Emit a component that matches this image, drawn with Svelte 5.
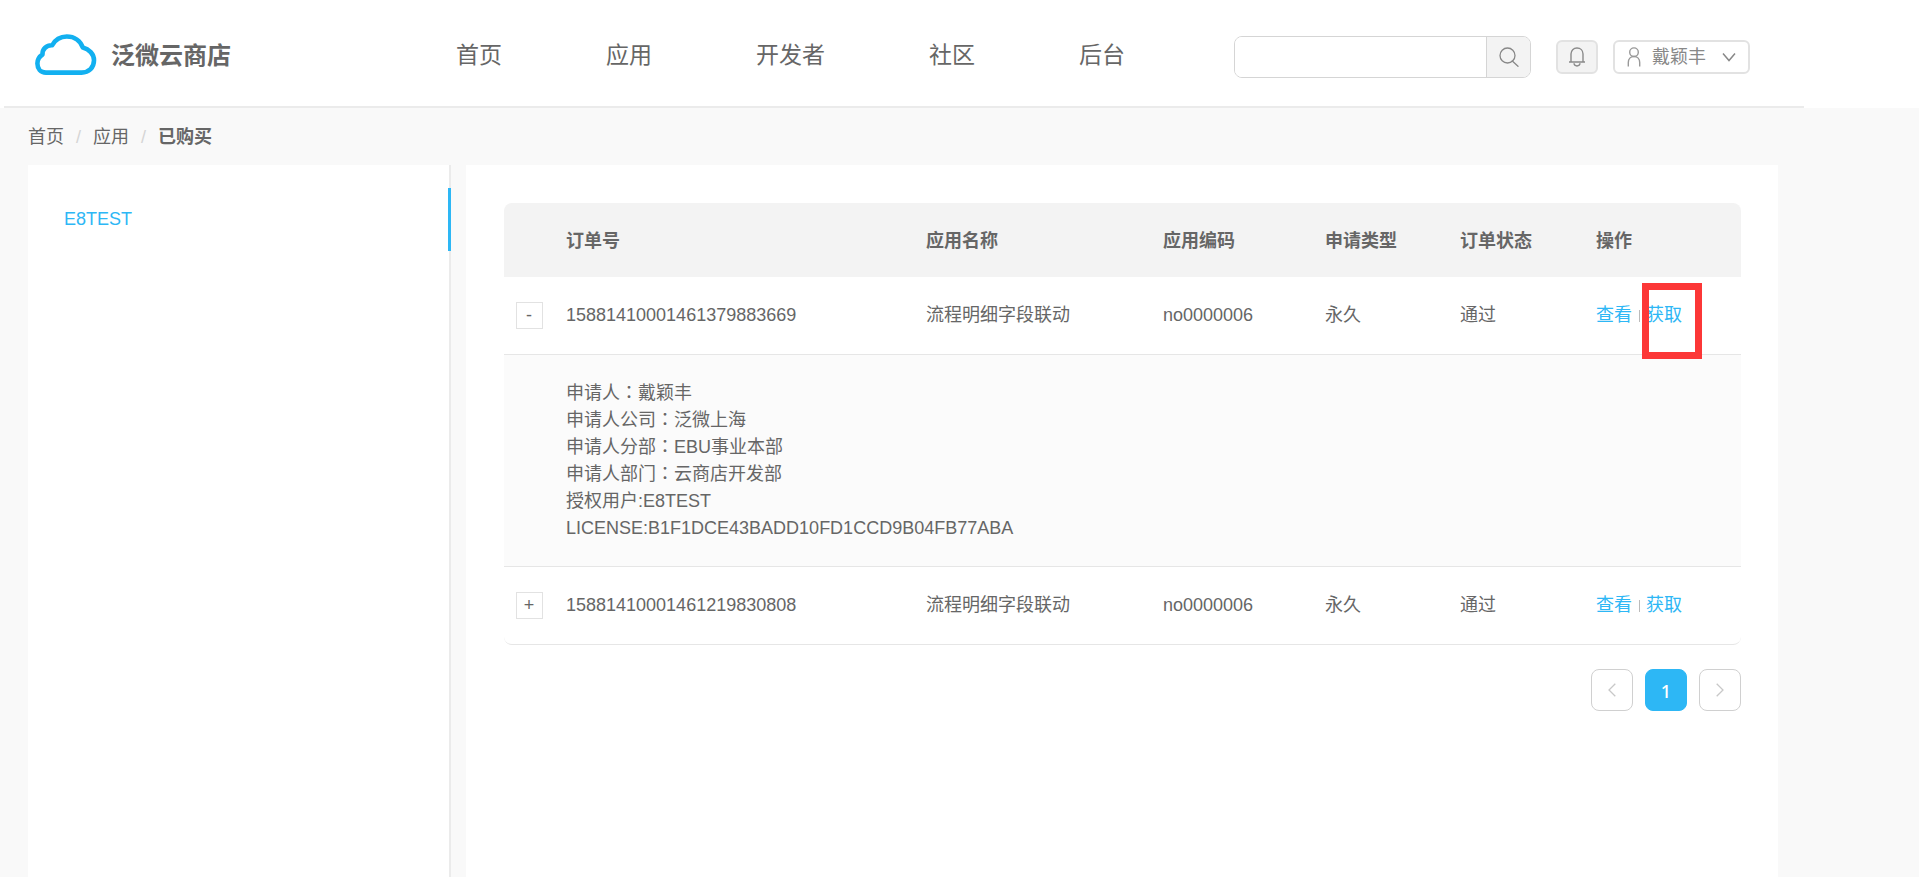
<script>
  const navItems = ["首页", "应用", "开发者", "社区", "后台"];

  const columns = ["订单号", "应用名称", "应用编码", "申请类型", "订单状态", "操作"];

  let keyword = $state("");

  let orders = $state([
    {
      id: "15881410001461379883669",
      name: "流程明细字段联动",
      code: "no0000006",
      type: "永久",
      status: "通过",
      open: true,
      marked: true,
    },
    {
      id: "15881410001461219830808",
      name: "流程明细字段联动",
      code: "no0000006",
      type: "永久",
      status: "通过",
      open: false,
      marked: false,
    },
  ]);

  const details = [
    { label: "申请人", colon: "：", value: "戴颖丰" },
    { label: "申请人公司", colon: "：", value: "泛微上海" },
    { label: "申请人分部", colon: "：", value: "EBU事业本部" },
    { label: "申请人部门", colon: "：", value: "云商店开发部" },
    { label: "授权用户", colon: ":", value: "E8TEST" },
    { label: "LICENSE", colon: ":", value: "B1F1DCE43BADD10FD1CCD9B04FB77ABA" },
  ];
</script>

<div class="page">
  <header>
    <div class="bar">
      <a class="logo" href="#home">
        <svg width="62" height="42" viewBox="0 0 62 42" fill="none" stroke="#12b0f0" stroke-width="4.6" stroke-linejoin="round">
          <path d="M11 38.6C5.500 38.600 2.400 34.500 2.400 29.500C2.400 25.500 4.300 22.600 7.500 20.500C7.200 15 11.500 11 17.200 11.300C20 6 25.500 2.500 31.800 2.500C39.500 2.500 45.500 7 47.800 13.600C54 15 59 20 59 26.300C59 33.500 54 38.600 46.500 38.600Z" />
        </svg>
        <span>泛微云商店</span>
      </a>

      <nav>
        {#each navItems as item}
          <a href="#nav">{item}</a>
        {/each}
      </nav>

      <div class="tools">
        <form class="search" onsubmit={(e) => e.preventDefault()}>
          <input type="text" aria-label="搜索" bind:value={keyword} />
          <button type="submit" aria-label="搜索">
            <svg width="20" height="20" viewBox="0 0 20 20" fill="none" stroke="#888" stroke-width="1.3" stroke-linecap="round">
              <circle cx="8.500" cy="8.500" r="7.500" />
              <path d="M13.300 14L19 19.300" />
            </svg>
          </button>
        </form>

        <button class="bell" type="button" aria-label="通知">
          <svg width="18" height="20" viewBox="0 0 18 20" fill="none" stroke="#8a8a8a" stroke-width="1.400">
            <path d="M1 15H17M3 15V7C3 3.400 5.500 1 9 1S15 3.400 15 7V15" />
            <path d="M6 16.300C6.200 18.200 7.400 19 9 19S11.800 18.200 12 16.300" />
          </svg>
        </button>

        <button class="user" type="button">
          <svg width="14" height="20" viewBox="0 0 14 20" fill="none" stroke="#999" stroke-width="1.400">
            <circle cx="7" cy="5.200" r="4.300" />
            <path d="M1.300 19.500V15.500C1.300 12 3.500 9.500 7 9.500S12.700 12 12.700 15.500V19.500" />
          </svg>
          <span>戴颖丰</span>
          <svg width="14" height="10" viewBox="0 0 14 10" fill="none" stroke="#888" stroke-width="1.500">
            <path d="M1 1.500L7 8.500L13 1.500" />
          </svg>
        </button>
      </div>
    </div>
  </header>

  <div class="breadcrumb">
    <a href="#home">首页</a>
    <i>/</i>
    <a href="#apps">应用</a>
    <i>/</i>
    <b>已购买</b>
  </div>

  <div class="content">
    <aside>
      <a class="active" href="#e8test">E8TEST</a>
    </aside>

    <main>
      <table>
        <colgroup>
          <col class="c-toggle" />
          <col class="c-id" />
          <col class="c-name" />
          <col class="c-code" />
          <col class="c-type" />
          <col class="c-status" />
          <col class="c-action" />
        </colgroup>
        <thead>
          <tr>
            <th></th>
            {#each columns as col}
              <th>{col}</th>
            {/each}
          </tr>
        </thead>
        <tbody>
          {#each orders as order}
            <tr class="order">
              <td class="toggle">
                <button type="button" onclick={() => (order.open = !order.open)}>{order.open ? "-" : "+"}</button>
              </td>
              <td>{order.id}</td>
              <td>{order.name}</td>
              <td>{order.code}</td>
              <td>{order.type}</td>
              <td>{order.status}</td>
              <td class="action">
                <div>
                  <a href="#view">查看</a>
                  <span class="divider"></span>
                  <a href="#get">获取</a>
                </div>
                {#if order.marked}
                  <span class="mark"></span>
                {/if}
              </td>
            </tr>
            {#if order.open}
              <tr class="detail">
                <td></td>
                <td colspan="6">
                  {#each details as d}
                    <p>{d.label}<span class:wide={d.colon === "："}>{d.colon}</span>{d.value}</p>
                  {/each}
                </td>
              </tr>
            {/if}
          {/each}
        </tbody>
      </table>

      <div class="pagination">
        <button type="button" aria-label="上一页" disabled>
          <svg width="8" height="14" viewBox="0 0 8 14" fill="none" stroke="#c8c8c8" stroke-width="1.300">
            <path d="M7.300 0.700L1 7L7.300 13.300" />
          </svg>
        </button>
        <button type="button" class="current">1</button>
        <button type="button" aria-label="下一页" disabled>
          <svg width="8" height="14" viewBox="0 0 8 14" fill="none" stroke="#c8c8c8" stroke-width="1.300">
            <path d="M0.700 0.700L7 7L0.700 13.300" />
          </svg>
        </button>
      </div>
    </main>
  </div>
</div>

<style>
  :global(body) {
    background: #f9f9f9;
  }

  .page {
    display: flex;
    flex-direction: column;
    min-height: 100vh;
    color: #666;
    font-family: "Liberation Sans", "Noto Sans CJK SC", sans-serif;
    font-size: 18px;
    line-height: 27px;
  }

  .page * {
    box-sizing: border-box;
  }

  a {
    color: inherit;
    text-decoration: none;
  }

  button,
  input {
    padding: 0;
    font: inherit;
    color: inherit;
  }

  button {
    display: flex;
    align-items: center;
    justify-content: center;
    cursor: pointer;
  }

  header {
    background: #fff;
  }

  .bar {
    display: flex;
    align-items: center;
    height: 108px;
    margin: 0 115px 0 4px;
    padding: 4px 54px 0 31px;
    border-bottom: 2px solid #ebebeb;
  }

  .logo {
    display: flex;
    align-items: center;
    gap: 14px;
    width: 421px;
    font-size: 24px;
    font-weight: bold;
  }

  nav {
    display: flex;
    gap: 104px;
    font-size: 23px;
    white-space: nowrap;
  }

  .tools {
    display: flex;
    align-items: center;
    margin: 4px 0 0 auto;
  }

  .search {
    display: flex;
    width: 297px;
    height: 42px;
    border: 1px solid #d5d5d5;
    border-radius: 8px;
    overflow: hidden;
  }

  .search input {
    flex: 1;
    min-width: 0;
    padding: 0 12px;
    border: 0;
    outline: 0;
    background: #fff;
  }

  .search button {
    width: 44px;
    border: 0;
    border-left: 1px solid #d5d5d5;
    background: #f3f3f3;
  }

  .bell,
  .user {
    height: 34px;
    border: 2px solid #e2e2e2;
    border-radius: 6px;
    background: #fff;
  }

  .bell {
    width: 42px;
    margin: 0 15px 0 25px;
    background: #f3f3f3;
  }

  .user {
    width: 137px;
    color: #888;
  }

  .user span {
    margin: 0 16px 0 11px;
  }

  .breadcrumb {
    display: flex;
    gap: 12px;
    padding: 16px 28px 14px;
  }

  .breadcrumb i {
    color: #d5d5d5;
    font-style: normal;
  }

  .content {
    display: grid;
    flex: 1;
    grid-template-columns: 423px 1fr;
    gap: 15px;
    margin: 0 141px 0 28px;
  }

  aside {
    padding-top: 23px;
    border-right: 2px solid #ebebeb;
    background: #fff;
  }

  aside a {
    display: block;
    margin-right: -2px;
    padding: 18px 36px;
    border-right: 3px solid #2db7f5;
    color: #2db7f5;
  }

  main {
    padding: 38px 37px 0 38px;
    background: #fff;
  }

  table {
    width: 100%;
    table-layout: fixed;
    border-collapse: separate;
    border-spacing: 0;
  }

  .c-toggle { width: 50px; }
  .c-id { width: 360px; }
  .c-name { width: 237px; }
  .c-code { width: 162px; }
  .c-type { width: 135px; }
  .c-status { width: 136px; }
  .c-action { width: 157px; }

  th,
  td {
    padding: 0 12px;
    text-align: left;
  }

  th {
    height: 74px;
    padding-top: 2px;
    background: #f3f3f3;
  }

  th:first-child {
    border-top-left-radius: 8px;
  }

  th:last-child {
    border-top-right-radius: 8px;
  }

  td {
    border-bottom: 1px solid #e6e6e6;
  }

  .order td {
    height: 78px;
  }

  tr:last-child td:first-child {
    border-bottom-left-radius: 8px;
  }

  tr:last-child td:last-child {
    border-bottom-right-radius: 8px;
  }

  .toggle {
    padding: 0;
  }

  .toggle button {
    width: 27px;
    height: 27px;
    margin: 0 auto;
    border: 1px solid #e2e2e2;
    background: #fff;
  }

  .action {
    position: relative;
    color: #2db7f5;
  }

  .action div {
    display: flex;
    align-items: center;
  }

  .divider {
    width: 1px;
    height: 12px;
    margin: 0 6px 0 7px;
    background: #bbb;
  }

  /* highlight frame round the "get" link, drawn over the cell */
  .mark {
    position: absolute;
    top: 6px;
    left: 58px;
    width: 60px;
    height: 76px;
    border: 7px solid #fc3737;
    pointer-events: none;
  }

  .detail td {
    padding: 25px 12px 24px;
    background: #fbfbfb;
  }

  .detail p {
    margin: 0;
  }

  /* the TC face centres the full-width colon */
  .wide {
    font-family: "Noto Sans CJK TC", sans-serif;
    line-height: 1;
  }

  .pagination {
    display: flex;
    justify-content: flex-end;
    gap: 12px;
    padding: 24px 0;
  }

  .pagination button {
    width: 42px;
    height: 42px;
    border: 1px solid #d0d0d0;
    border-radius: 8px;
    background: #fff;
  }

  .pagination .current {
    padding-top: 2px;
    border-color: #2db7f5;
    background: #2db7f5;
    color: #fff;
    font-family: "Noto Sans", sans-serif;
    font-weight: 500;
  }
</style>
